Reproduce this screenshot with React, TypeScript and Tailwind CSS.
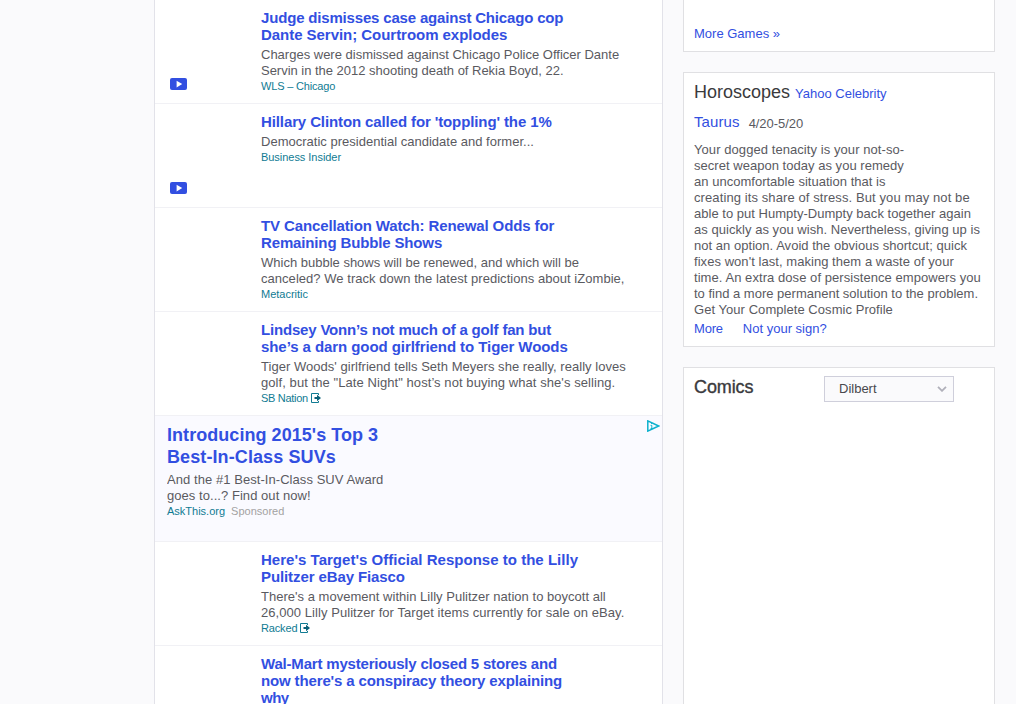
import React from "react";

// A line of copy with an optional letter-spacing class.
type Line = [text: string, tracking?: string];

type Story = {
  title: Line[];
  body: Line[];
  source: Line;
  video?: boolean;
  exit?: boolean;
};

const top: Story[] = [
  {
    title: [
      ["Judge dismisses case against Chicago cop", "tracking-[-0.175px]"],
      ["Dante Servin; Courtroom explodes", "tracking-[-0.04px]"],
    ],
    body: [
      ["Charges were dismissed against Chicago Police Officer Dante"],
      ["Servin in the 2012 shooting death of Rekia Boyd, 22.", "tracking-[-0.02px]"],
    ],
    source: ["WLS – Chicago", "tracking-[-0.18px]"],
    video: true,
  },
  {
    title: [["Hillary Clinton called for 'toppling' the 1%", "tracking-[-0.11px]"]],
    body: [["Democratic presidential candidate and former...", "tracking-[0.01px]"]],
    source: ["Business Insider", "tracking-[-0.04px]"],
    video: true,
  },
  {
    title: [
      ["TV Cancellation Watch: Renewal Odds for", "tracking-[-0.12px]"],
      ["Remaining Bubble Shows", "tracking-[-0.14px]"],
    ],
    body: [
      ["Which bubble shows will be renewed, and which will be"],
      ["canceled? We track down the latest predictions about iZombie,", "tracking-[0.04px]"],
    ],
    source: ["Metacritic"],
  },
  {
    title: [
      ["Lindsey Vonn’s not much of a golf fan but", "tracking-[-0.18px]"],
      ["she’s a darn good girlfriend to Tiger Woods", "tracking-[-0.07px]"],
    ],
    body: [
      ["Tiger Woods' girlfriend tells Seth Meyers she really, really loves", "tracking-[0.03px]"],
      ["golf, but the \"Late Night\" host’s not buying what she's selling.", "tracking-[0.07px]"],
    ],
    source: ["SB Nation", "tracking-[-0.3px]"],
    exit: true,
  },
];

const bottom: Story[] = [
  {
    title: [
      ["Here's Target's Official Response to the Lilly", "tracking-[0.02px]"],
      ["Pulitzer eBay Fiasco", "tracking-[-0.1px]"],
    ],
    body: [
      ["There's a movement within Lilly Pulitzer nation to boycott all", "tracking-[0.02px]"],
      ["26,000 Lilly Pulitzer for Target items currently for sale on eBay.", "tracking-[0.06px]"],
    ],
    source: ["Racked", "tracking-[-0.15px]"],
    exit: true,
  },
  {
    title: [
      ["Wal-Mart mysteriously closed 5 stores and", "tracking-[-0.19px]"],
      ["now there's a conspiracy theory explaining", "tracking-[-0.14px]"],
      ["why", "tracking-[-0.5px]"],
    ],
    body: [],
    source: [""],
  },
];

const horoscope: Line[] = [
  ["Your dogged tenacity is your not-so-", "tracking-[0.07px]"],
  ["secret weapon today as you remedy", "tracking-[0.03px]"],
  ["an uncomfortable situation that is", "tracking-[0.02px]"],
  ["creating its share of stress. But you may not be", "tracking-[0.1px]"],
  ["able to put Humpty-Dumpty back together again", "tracking-[0.02px]"],
  ["as quickly as you wish. Nevertheless, giving up is", "tracking-[0.04px]"],
  ["not an option. Avoid the obvious shortcut; quick", "tracking-[0.03px]"],
  ["fixes won't last, making them a waste of your", "tracking-[0.05px]"],
  ["time. An extra dose of persistence empowers you", "tracking-[0.06px]"],
  ["to find a more permanent solution to the problem."],
  ["Get Your Complete Cosmic Profile", "tracking-[0.05px]"],
];

function Lines({ lines }: { lines: Line[] }) {
  return (
    <>
      {lines.map(([text, tracking]) => (
        <span key={text} className={`block ${tracking ?? ""}`}>{text}</span>
      ))}
    </>
  );
}

function StoryRow({ s }: { s: Story }) {
  return (
    <li className="flex h-[104px] shrink-0 border-b border-[#f1f1f5] pt-[9px]">
      <div className="flex w-[106px] shrink-0 items-end pb-[13px] pl-[15px]">
        {s.video && (
          <svg width="17" height="12" viewBox="0 0 17 12">
            <rect width="17" height="12" rx="2" fill="#324fe1" />
            <path d="M6.6 2.8v6.6L12.2 6.1z" fill="#fff" />
          </svg>
        )}
      </div>
      <div className="whitespace-nowrap">
        <h3 className="text-[15px] leading-[17px] font-bold text-[#324fe1]"><Lines lines={s.title} /></h3>
        <p className="mt-1 text-[13px] leading-4 text-[#5a5a5f]"><Lines lines={s.body} /></p>
        <div className="flex items-start text-[11px] leading-[15px] text-[#107b93]">
          <span className={s.source[1]}>{s.source[0]}</span>
          {s.exit && (
            <svg className="mt-[2px] ml-[3px]" width="10" height="10" viewBox="0 0 10 10">
              <path d="M7.5 2V.5h-7v9h7V8" fill="none" stroke="#107b93" />
              <path d="M3.5 4H6V1.8L10 5 6 8.2V6H3.5z" fill="#0b6178" />
            </svg>
          )}
        </div>
      </div>
    </li>
  );
}

export default function App() {
  return (
    <div className="flex h-[704px] w-[1016px] overflow-hidden bg-[#fafafc] pl-[154px] font-['Liberation_Sans',Arial,sans-serif]">
      <main className="h-[704px] w-[509px] shrink-0 overflow-hidden border-x border-[#e2e2e9] bg-white">
        <ul>
          {top.map((s) => <StoryRow key={s.source[0]} s={s} />)}
          <li className="flex h-[126px] justify-between border-b border-[#f1f1f5] bg-[#fafaff] pt-2 pl-3 whitespace-nowrap">
            <div>
              <h3 className="text-[18px] leading-[22px] font-bold text-[#324fe1]">
                <Lines lines={[["Introducing 2015's Top 3", "tracking-[0.05px]"], ["Best-In-Class SUVs", "tracking-[0.1px]"]]} />
              </h3>
              <p className="mt-1 h-[31px] overflow-hidden text-[13px] leading-4 text-[#5a5a5f]">
                <Lines lines={[["And the #1 Best-In-Class SUV Award", "tracking-[0.06px]"], ["goes to...? Find out now!", "tracking-[0.05px]"]]} />
              </p>
              <div className="mt-px flex gap-[6px] text-[11px] leading-[15px] text-[#107b93]">
                AskThis.org <span className="text-[#a3a2a2]">Sponsored</span>
              </div>
            </div>
            <svg className="mt-[-4px] mr-[2px]" width="13" height="12" viewBox="0 0 13 12" fill="none" stroke="#0db1cd">
              <path d="M.8.9v10.2L11.6 6z" strokeWidth="1.5" />
              <path d="M4.6 2.8v1.3M3.6 5.4h1.2v3.2M3.6 8.5h2.2" />
            </svg>
          </li>
          {bottom.map((s) => <StoryRow key={s.title[0][0]} s={s} />)}
        </ul>
      </main>

      <aside className="ml-5 flex w-[312px] shrink-0 flex-col gap-5 whitespace-nowrap text-[13px] text-[#5a5a5f]">
        <section className="h-[52px] shrink-0 border border-t-0 border-[#e0e0e3] bg-white pt-[26px] pl-[10px] leading-4 text-[#324fe1]">
          More Games »
        </section>
        <section className="h-[275px] shrink-0 border border-[#e0e0e3] bg-white pl-[10px]">
          <div className="flex items-baseline gap-[5px] pt-2 leading-[22px]">
            <h2 className="text-[18px] text-[#3a3a3d]">Horoscopes</h2>
            <a className="text-[#324fe1]">Yahoo Celebrity</a>
          </div>
          <div className="mt-[6px] flex h-[23px] items-start gap-[9px] leading-[22px]">
            <a className="text-[15px] tracking-[0.1px] text-[#324fe1]">Taurus</a>
            <span className="pt-[2px] tracking-[-0.05px]">4/20-5/20</span>
          </div>
          <p className="mt-2 leading-4"><Lines lines={horoscope} /></p>
          <div className="mt-[3px] flex gap-5 leading-4 text-[#324fe1]">
            <a className="tracking-[-0.2px]">More</a>
            <a>Not your sign?</a>
          </div>
        </section>
        <section className="flex h-[360px] shrink-0 items-start border border-[#e0e0e3] bg-white pt-2 pl-[10px]">
          <h2 className="w-[130px] text-[18px] leading-[22px] tracking-[-0.1px] text-[#3a3a3d] [-webkit-text-stroke:0.35px_#3a3a3d]">Comics</h2>
          <button className="flex h-[26px] w-[130px] items-center justify-between border border-[#cfcfdb] bg-[#fafafc] pr-[6px] pl-[14px] text-[#48484d]">
            Dilbert
            <svg width="10" height="6" viewBox="0 0 10 6" fill="none" stroke="#b0b0ba" strokeWidth="1.8">
              <path d="M1 .8l4 4 4-4" />
            </svg>
          </button>
        </section>
      </aside>
    </div>
  );
}
